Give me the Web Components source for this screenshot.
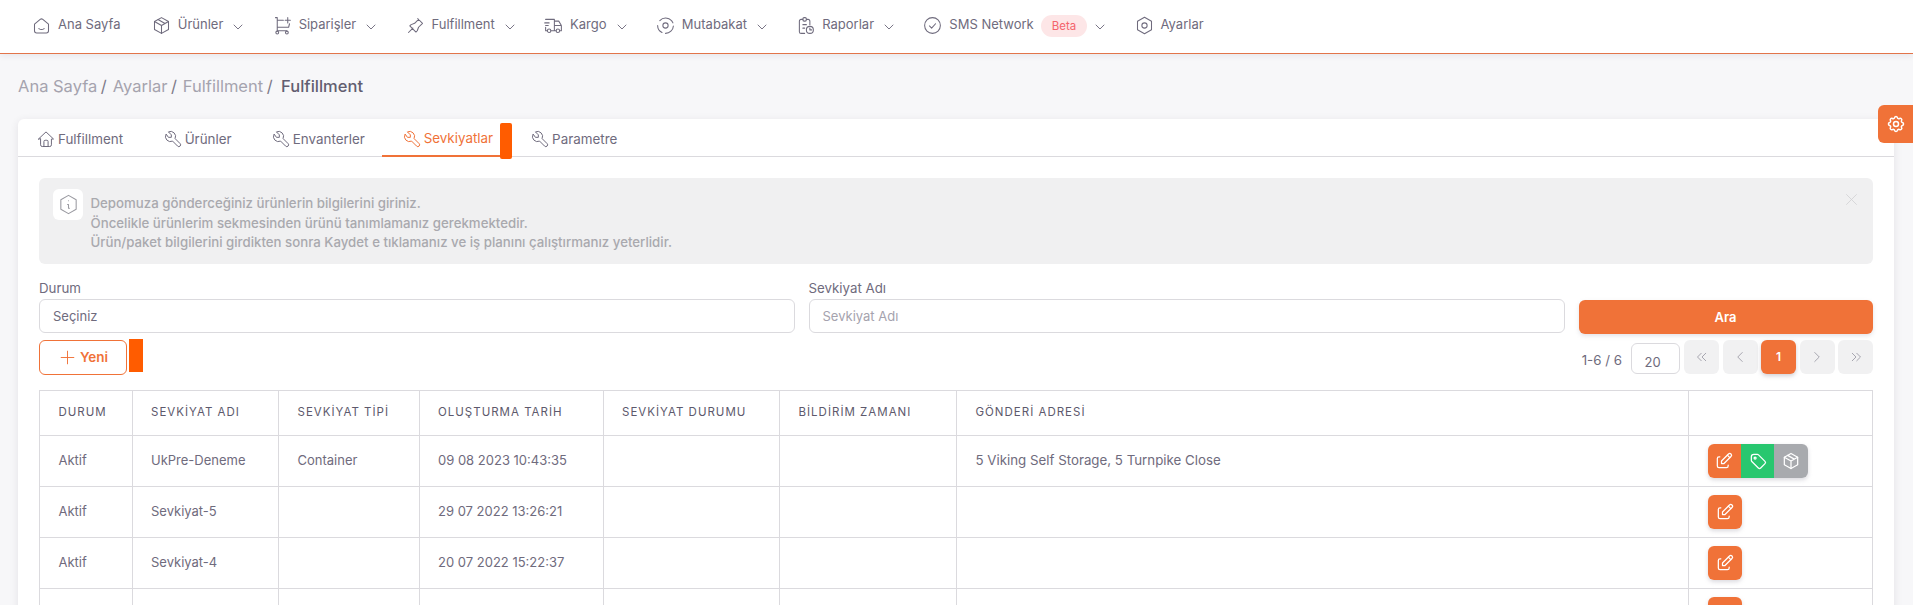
<!DOCTYPE html>
<html lang="tr">
<head>
<meta charset="utf-8">
<title>Sevkiyatlar</title>
<style>
  html, body { margin: 0; height: 605px; overflow: hidden; }
  body { background: #f7f7f9; font: 13px/1.5 Inter, "Noto Sans", sans-serif; color: #6f6b7d; }
</style>
</head>
<body>
<app-header></app-header>
<main-content></main-content>
<settings-tab></settings-tab>

<script>
// line icons used all over the page, 24x24 grid
const ICONS = {
  homeSmile: '<path d="M4 10.500 10.500 5a2.400 2.400 0 0 1 3 0L20 10.500V18a2.500 2.500 0 0 1-2.500 2.500h-11A2.500 2.500 0 0 1 4 18z"/><path d="M9 15.500c1.600 1.200 4.400 1.200 6 0"/>',
  box: '<path d="M12 3l8 4.500v9L12 21l-8-4.500v-9z"/><path d="M12 12l8-4.500M12 12v9M12 12L4 7.500M8 5.200l8 4.600"/>',
  cartPlus: '<circle cx="6" cy="20" r="1.600"/><circle cx="17" cy="20" r="1.600"/><path d="M17 18H6V3H4M6 6h7M6 14h13l1-4M18 3v6M15 6h6"/>',
  pin: '<path d="M9 15l-5 5M14.500 4 20 9.500M15.500 5l-4.500 4.500-4 1.500-1.500 1.500 7 7 1.500-1.500 1.500-4 4.500-4.500"/>',
  truck: '<circle cx="7" cy="18" r="2"/><circle cx="17" cy="18" r="2"/><path d="M5 18H3v-4M3 5h10v13M9 18h6M19 18h2v-6h-8M13 7h5l3 5M2 9h5M3 12h3"/>',
  target: '<circle cx="12" cy="12" r="3"/><path d="M5.500 6.500A9 9 0 0 1 20.500 9M21 12.500A9 9 0 0 1 12 21M8 20a9 9 0 0 1-5-8"/>',
  report: '<path d="M9 5H7a2 2 0 0 0-2 2v12a2 2 0 0 0 2 2h4M17 11V7a2 2 0 0 0-2-2h-2"/><rect x="9" y="3" width="4" height="4" rx="1.500"/><path d="M9 11h4M9 15h2"/><circle cx="17" cy="17" r="4"/><path d="M17 15v2h2"/>',
  check: '<circle cx="12" cy="12" r="9"/><path d="M8.500 12.500l2.500 2.500 4.500-5"/>',
  hexagon: '<path d="M12 2.500l8 4.600v9.800l-8 4.600-8-4.600V7.100z"/><circle cx="12" cy="12" r="3"/>',
  chevron: '<path d="M6 9l6 6 6-6"/>',
  home: '<path d="M3 12l9-8.500 9 8.500h-2.500v7a2 2 0 0 1-2 2h-9a2 2 0 0 1-2-2v-7z"/><path d="M9.500 21v-6a1.500 1.500 0 0 1 1.500-1.500h2a1.500 1.500 0 0 1 1.500 1.500v6"/>',
  tool: '<path d="M7 10h3V7L6.500 3.500a6 6 0 0 1 8 8l6 6a2 2 0 0 1-3 3l-6-6a6 6 0 0 1-8-8z"/>',
  info: '<path d="M12 2.500l8 4.600v9.800l-8 4.600-8-4.600V7.100z"/><path d="M12 8h.01M11 12h1v4h1"/>',
  close: '<path d="M5 5l14 14M19 5L5 19"/>',
  plus: '<path d="M12 4v16M4 12h16"/>',
  gear: '<path d="M10.300 4.300c.4-1.800 3-1.800 3.400 0a1.700 1.700 0 0 0 2.600 1.100c1.500-.9 3.300.8 2.400 2.400a1.700 1.700 0 0 0 1 2.500c1.800.4 1.800 3 0 3.400a1.700 1.700 0 0 0-1 2.600c.9 1.500-.9 3.300-2.400 2.400a1.700 1.700 0 0 0-2.600 1c-.4 1.800-3 1.800-3.400 0a1.700 1.700 0 0 0-2.600-1c-1.500.9-3.300-.9-2.400-2.400a1.700 1.700 0 0 0-1-2.600c-1.800-.4-1.800-3 0-3.400a1.700 1.700 0 0 0 1-2.500c-.9-1.600.9-3.300 2.400-2.400 1 .6 2.300.1 2.600-1.100z"/><circle cx="12" cy="12" r="3"/>',
  edit: '<path d="M7 7H6a2 2 0 0 0-2 2v9a2 2 0 0 0 2 2h9a2 2 0 0 0 2-2v-1"/><path d="M20.400 6.600a2.100 2.100 0 0 0-3-3L9 12v3h3z"/><path d="M16 5l3 3"/>',
  tag: '<circle cx="8.500" cy="8.500" r="1.200"/><path d="M4 7v4.200a2 2 0 0 0 .6 1.400l7.800 7.800a2 2 0 0 0 2.800 0l5.200-5.200a2 2 0 0 0 0-2.800L12.600 4.600A2 2 0 0 0 11.200 4H7a3 3 0 0 0-3 3z"/>',
  chevLeft: '<path d="M15 6l-6 6 6 6"/>',
  chevRight: '<path d="M9 6l6 6-6 6"/>',
  chevsLeft: '<path d="M11 7l-5 5 5 5M17 7l-5 5 5 5"/>',
  chevsRight: '<path d="M7 7l5 5-5 5M13 7l5 5-5 5"/>'
};

function icon(name, size, width) {
  return `<svg width="${size}" height="${size}" viewBox="0 0 24 24" fill="none" stroke="currentColor" stroke-width="${width || 1.5}" stroke-linecap="round" stroke-linejoin="round" aria-hidden="true">${ICONS[name]}</svg>`;
}

class NavItem extends HTMLElement {
  connectedCallback() {
    const hasMenu = this.hasAttribute('menu');
    this.attachShadow({mode: 'open'}).innerHTML = `
      <style>
        :host { display: flex; align-items: center; color: #6f6b7d; font-size: 13px; }
        .icon { display: flex; margin-right: 6px; }
        .chev { display: flex; margin: 3px 0 0 7px; }
      </style>
      <span class="icon">${icon(this.getAttribute('icon'), 21, 1.2)}</span>
      <slot></slot>
      ${hasMenu ? `<span class="chev">${icon('chevron', 16, 1.4)}</span>` : ''}`;
  }
}
customElements.define('nav-item', NavItem);

class AppHeader extends HTMLElement {
  connectedCallback() {
    this.attachShadow({mode: 'open'}).innerHTML = `
      <style>
        :host {
          display: flex; align-items: center; box-sizing: border-box; height: 54px;
          padding: 0 0 3px 31px; gap: 25.300px; background: #fff; border-bottom: 1px solid #e2744a;
          box-shadow: 0 2px 6px rgba(47,43,61,.08);
        }
        .beta {
          display: inline-block; margin: 2px -2px 0 7px; padding: 0 11px; height: 22px; line-height: 22px;
          border-radius: 11px; background: #fde6e7; color: #f4646c; font-size: 11.500px;
        }
        .first { margin-right: 5px; }
      </style>
      <nav-item class="first" icon="homeSmile">Ana Sayfa</nav-item>
      <nav-item icon="box" menu>Ürünler</nav-item>
      <nav-item icon="cartPlus" menu>Siparişler</nav-item>
      <nav-item icon="pin" menu>Fulfillment</nav-item>
      <nav-item icon="truck" menu>Kargo</nav-item>
      <nav-item icon="target" menu>Mutabakat</nav-item>
      <nav-item icon="report" menu>Raporlar</nav-item>
      <nav-item icon="check" menu>SMS Network<span class="beta">Beta</span></nav-item>
      <nav-item icon="hexagon">Ayarlar</nav-item>`;
  }
}
customElements.define('app-header', AppHeader);

class BreadCrumb extends HTMLElement {
  connectedCallback() {
    this.attachShadow({mode: 'open'}).innerHTML = `
      <style>
        :host { display: flex; gap: 6px; font-size: 16.500px; line-height: 22px; color: #a5a3ae; }
        b { font-weight: 500; color: #625e70; margin-left: 2.500px; }
        i { font-style: normal; color: #7d7a88; margin-left: 3.500px; }
      </style>
      <span>Ana Sayfa<i>/</i></span>
      <span>Ayarlar<i>/</i></span>
      <span>Fulfillment<i>/</i></span>
      <b>Fulfillment</b>`;
  }
}
customElements.define('bread-crumb', BreadCrumb);

class TabBar extends HTMLElement {
  connectedCallback() {
    const tab = (ic, label, active) => `<span class="tab${active ? ' active' : ''}">${icon(ic, 20, 1.2)}${label}</span>`;
    this.attachShadow({mode: 'open'}).innerHTML = `
      <style>
        :host { display: flex; align-items: stretch; height: 37px; border-bottom: 1px solid #dbdade; padding-left: 18px; }
        .tab { display: flex; align-items: center; gap: 2px; font-size: 13.400px; margin-right: 38px; padding-top: 3px; color: #6f6b7d; }
        .tab:nth-child(2) { margin-right: 39.500px; }
        .tab:nth-child(3) { margin-right: 39.200px; }
        .tab:nth-child(4) { margin-right: 36.800px; }
        .tab.active { color: #f07238; margin: 0 0 -1px -20px; padding: 3px 7px 0 20px; border-bottom: 2px solid #f07238; box-sizing: border-box; }
        .marker { width: 12px; height: 36px; margin: 4px 18px 0 0; border-radius: 2px; background: #ff5c00; position: relative; }
      </style>
      ${tab('home', 'Fulfillment')}
      ${tab('tool', 'Ürünler')}
      ${tab('tool', 'Envanterler')}
      ${tab('tool', 'Sevkiyatlar', true)}
      <span class="marker"></span>
      ${tab('tool', 'Parametre')}`;
  }
}
customElements.define('tab-bar', TabBar);

class InfoAlert extends HTMLElement {
  connectedCallback() {
    this.attachShadow({mode: 'open'}).innerHTML = `
      <style>
        :host {
          display: flex; box-sizing: border-box; height: 86px; padding: 11px 14px; gap: 7.500px;
          border-radius: 6px; background: #f0f0f1; color: #a9a9ae; font-weight: 500; position: relative;
        }
        .badge {
          flex: none; display: flex; align-items: center; justify-content: center;
          width: 30px; height: 31px; border-radius: 6px; background: #fff; color: #9a9aa1;
        }
        .text { padding-top: 5px; line-height: 19.500px; font-size: 13.250px; }
        .close { position: absolute; top: 13px; right: 13px; display: flex; color: #d2d2d5; }
      </style>
      <span class="badge">${icon('info', 23, 1.1)}</span>
      <div class="text"><slot></slot></div>
      <span class="close">${icon('close', 17, 1.2)}</span>`;
  }
}
customElements.define('info-alert', InfoAlert);

class FilterForm extends HTMLElement {
  connectedCallback() {
    this.attachShadow({mode: 'open'}).innerHTML = `
      <style>
        :host { display: grid; grid-template-columns: 756px 756.500px 294px; column-gap: 13.500px; align-items: end; margin-top: 14px; }
        label { display: block; font-size: 13.300px; line-height: 20px; margin-bottom: 1px; color: #6f6b7d; }
        .field {
          box-sizing: border-box; height: 34px; padding: 0 13px; line-height: 32px; font-size: 13px;
          border: 1px solid #dbdade; border-radius: 6px; background: #fff;
        }
        .placeholder { color: #a5a3ae; }
        .search {
          height: 34px; line-height: 34px; margin-bottom: -1px; text-align: center; border-radius: 6px; background: #f07238;
          color: #fff; font-weight: 600; box-shadow: 0 2px 4px rgba(165,163,174,.3);
        }
      </style>
      <div><label>Durum</label><div class="field">Seçiniz</div></div>
      <div><label>Sevkiyat Adı</label><div class="field placeholder">Sevkiyat Adı</div></div>
      <div class="search">Ara</div>`;
  }
}
customElements.define('filter-form', FilterForm);

class PagerBar extends HTMLElement {
  connectedCallback() {
    const btn = (ic) => `<span class="page">${icon(ic, 18, 1.3)}</span>`;
    this.attachShadow({mode: 'open'}).innerHTML = `
      <style>
        :host { display: flex; align-items: flex-start; height: 36px; margin-top: 7px; }
        .new {
          box-sizing: border-box; display: flex; align-items: center; justify-content: center; gap: 3px;
          width: 88px; height: 35px; border: 1px solid #f07238; border-radius: 6px; color: #f07238; font-weight: 600; font-size: 13.500px;
        }
        .marker { width: 14px; height: 33px; margin: -1px 0 0 2px; background: #ff5c00; }
        .pager { display: flex; align-items: center; gap: 3.500px; margin-left: auto; height: 34px; }
        .count { margin-right: 5px; font-size: 13.300px; padding-top: 7px; }
        .size {
          box-sizing: border-box; width: 49px; height: 31px; margin: 3px 1px 0 0; padding: 6px 0 0 13px; line-height: 24px;
          border: 1px solid #dbdade; border-radius: 6px;
        }
        .page {
          display: flex; align-items: center; justify-content: center; width: 35px; height: 34px;
          border-radius: 6px; background: #f1f1f2; color: #a5a3ae;
        }
        .page.current { background: #f07238; color: #fff; font-weight: 600; font-size: 12px; box-shadow: 0 2px 4px rgba(165,163,174,.5); }
      </style>
      <span class="new">${icon('plus', 19, 1.2)}Yeni</span>
      <span class="marker"></span>
      <div class="pager">
        <span class="count">1-6 / 6</span>
        <span class="size">20</span>
        ${btn('chevsLeft')}${btn('chevLeft')}
        <span class="page current">1</span>
        ${btn('chevRight')}${btn('chevsRight')}
      </div>`;
  }
}
customElements.define('pager-bar', PagerBar);

class ActionButtons extends HTMLElement {
  connectedCallback() {
    const kinds = (this.getAttribute('kinds') || 'edit').split(' ');
    const look = {edit: ['edit', '#f07238'], tag: ['tag', '#28c76f'], box: ['box', '#a8aaae']};
    this.attachShadow({mode: 'open'}).innerHTML = `
      <style>
        :host { display: inline-flex; border-radius: 6px; overflow: hidden; box-shadow: 0 2px 4px rgba(165,163,174,.4); vertical-align: middle; }
        span { display: flex; align-items: center; justify-content: center; width: 33.400px; height: 34px; color: #fff; }
        :host([kinds="edit"]) span { width: 34px; }
      </style>
      ${kinds.map(k => `<span style="background:${look[k][1]}">${icon(look[k][0], 20, 1.500)}</span>`).join('')}`;
  }
}
customElements.define('action-buttons', ActionButtons);

class ShipmentTable extends HTMLElement {
  connectedCallback() {
    const rows = [
      ['Aktif', 'UkPre-Deneme', 'Container', '09 08 2023 10:43:35', '', '', '5 Viking Self Storage, 5 Turnpike Close', 'edit tag box'],
      ['Aktif', 'Sevkiyat-5', '', '29 07 2022 13:26:21', '', '', '', 'edit'],
      ['Aktif', 'Sevkiyat-4', '', '20 07 2022 15:22:37', '', '', '', 'edit'],
      ['', '', '', '', '', '', '', 'edit']
    ];
    const heads = ['Durum', 'Sevkiyat Adı', 'Sevkiyat Tipi', 'Oluşturma Tarih', 'Sevkiyat Durumu', 'Bildirim Zamanı', 'Gönderi Adresi', ''];
    const widths = [92.500, 146.500, 140.500, 184, 176.500, 177, 732, 183.500];
    this.attachShadow({mode: 'open'}).innerHTML = `
      <style>
        :host { display: block; margin-top: 14px; }
        table { width: 1833.500px; table-layout: fixed; border-collapse: collapse; font-size: 13px; }
        th, td { border: 1px solid #dbdade; padding: 0 0 0 18.500px; text-align: left; white-space: nowrap; }
        th { height: 44px; font-weight: 400; font-size: 11.500px; letter-spacing: 1px; text-transform: uppercase; color: #5d596c; }
        td { height: 50px; }
        td:nth-child(7) { font-size: 13.300px; }
      </style>
      <table>
        <colgroup>${widths.map(w => `<col style="width:${w}px">`).join('')}</colgroup>
        <thead><tr>${heads.map(h => `<th>${h}</th>`).join('')}</tr></thead>
        <tbody>
          ${rows.map(r => `<tr>${r.map((c, i) => `<td>${i === 7 ? `<action-buttons kinds="${c}"></action-buttons>` : c}</td>`).join('')}</tr>`).join('')}
        </tbody>
      </table>`;
  }
}
customElements.define('shipment-table', ShipmentTable);

class SettingsTab extends HTMLElement {
  connectedCallback() {
    this.attachShadow({mode: 'open'}).innerHTML = `
      <style>
        :host {
          position: fixed; top: 105px; right: 0; width: 35px; height: 38px; display: flex; align-items: center; justify-content: center;
          background: #f07238; color: #fff; border-radius: 6px 0 0 6px;
        }
      </style>
      ${icon('gear', 20, 1.800)}`;
  }
}
customElements.define('settings-tab', SettingsTab);

class MainContent extends HTMLElement {
  connectedCallback() {
    this.attachShadow({mode: 'open'}).innerHTML = `
      <style>
        :host { display: block; padding: 21px 19px 0 18px; }
        .card { margin-top: 22px; background: #fff; border-radius: 6px 6px 0 0; box-shadow: 0 2px 8px rgba(47,43,61,.1); }
        .body { padding: 21px 21px 0 21px; }
      </style>
      <bread-crumb></bread-crumb>
      <div class="card">
        <tab-bar></tab-bar>
        <div class="body">
          <info-alert>Depomuza gönderceğiniz ürünlerin bilgilerini giriniz.<br>Öncelikle ürünlerim sekmesinden ürünü tanımlamanız gerekmektedir.<br>Ürün/paket bilgilerini girdikten sonra Kaydet e tıklamanız ve iş planını çalıştırmanız yeterlidir.</info-alert>
          <filter-form></filter-form>
          <pager-bar></pager-bar>
          <shipment-table></shipment-table>
        </div>
      </div>`;
  }
}
customElements.define('main-content', MainContent);
</script>
</body>
</html>
